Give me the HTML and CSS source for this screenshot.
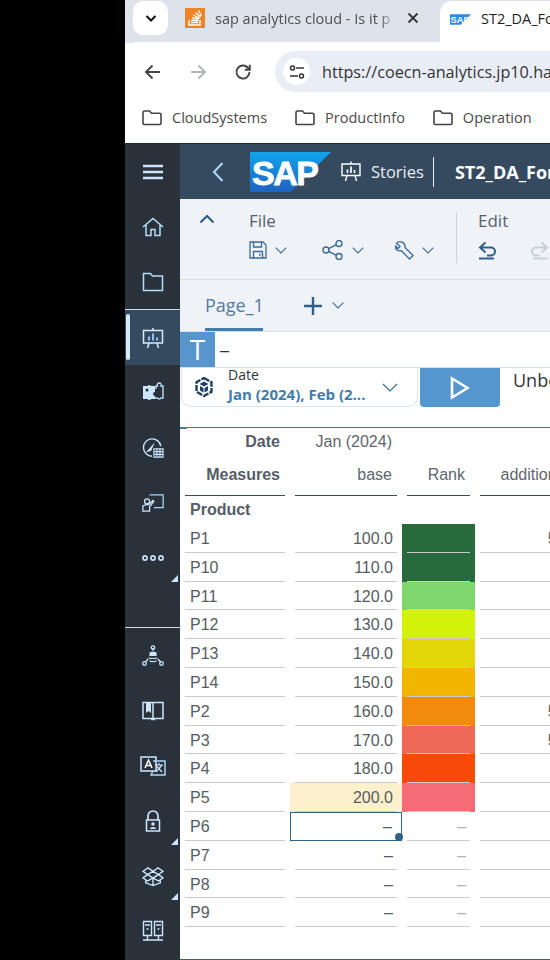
FILE: index.html
```html
<!DOCTYPE html>
<html lang="en">
<head>
<meta charset="utf-8">
<title>ST2_DA_Fo</title>
<link rel="stylesheet" href="styles.css">
</head>
<body>
<div class="black"></div>
<div class="window">
  <div class="tabstrip">
    <div class="tabmenu"><svg width="14" height="14" viewBox="0 0 14 14"><path d="M2.5 5l4.500 4.500L11.500 5" fill="none" stroke="#111" stroke-width="2"/></svg></div>
    <div class="tab">
      <svg class="favicon" width="20" height="20" viewBox="0 0 20 20"><rect width="20" height="20" fill="#ee8427"/><path d="M4 12v5h11v-5M6 14.500h7M6.300 12l7 .7M7 9.500l6.800 1.800M8.300 7l6.200 3.200M10.500 4.500l5 4.500M13.500 2.500l3 5.500" fill="none" stroke="#fff" stroke-width="1.400"/></svg>
      <span class="tabtitle">sap analytics cloud - Is it p</span>
      <svg class="tabclose" width="12" height="12" viewBox="0 0 12 12"><path d="M1.500 1.500l9 9M10.500 1.500l-9 9" stroke="#333" stroke-width="1.800"/></svg>
    </div>
    <div class="tab-active">
      <svg width="21" height="11" viewBox="0 0 81 40"><path d="M0 0h81L41 40H0z" fill="#2a8ce0"/><text x="2" y="33" font-family="Liberation Sans" font-weight="700" font-size="36" fill="#fff">SAP</text></svg>
      <span class="tabtitle-active">ST2_DA_Fo</span>
    </div>
  </div>
  <div class="navbar-chrome">
    <svg class="nav-ic" width="18" height="16" viewBox="0 0 18 16"><path d="M16 8H2M8.500 1.500L2 8l6.500 6.500" fill="none" stroke="#444" stroke-width="1.900"/></svg>
    <svg class="nav-ic" width="18" height="16" viewBox="0 0 18 16"><path d="M2 8h14M9.500 1.500L16 8l-6.500 6.500" fill="none" stroke="#b4b7ba" stroke-width="1.900"/></svg>
    <svg class="nav-ic" width="18" height="18" viewBox="0 0 18 18"><path d="M15.500 9a6.500 6.500 0 1 1-2-4.700L15.500 6.500M15.800 1.800v5h-5" fill="none" stroke="#444" stroke-width="1.900"/></svg>
    <div class="address">
      <span class="tune"><svg width="16" height="14" viewBox="0 0 16 14"><circle cx="3.500" cy="3" r="2" fill="none" stroke="#333" stroke-width="1.500"/><path d="M7 3h8M1 11h8" stroke="#333" stroke-width="1.700"/><circle cx="12.500" cy="11" r="2" fill="none" stroke="#333" stroke-width="1.500"/></svg></span>
      <span class="url">https://coecn-analytics.jp10.hana.ondemand.com</span>
    </div>
  </div>
  <div class="bookmarks">
    <span class="bm"><svg width="20" height="16" viewBox="0 0 20 16"><path d="M1 2.500a1.500 1.500 0 0 1 1.500-1.500h5l2 2.200h8a1.500 1.500 0 0 1 1.500 1.500v8.800a1 1 0 0 1-1 1H2a1 1 0 0 1-1-1z" fill="none" stroke="#444" stroke-width="1.600"/></svg>CloudSystems</span>
    <span class="bm"><svg width="20" height="16" viewBox="0 0 20 16"><path d="M1 2.500a1.500 1.500 0 0 1 1.500-1.500h5l2 2.200h8a1.500 1.500 0 0 1 1.500 1.500v8.800a1 1 0 0 1-1 1H2a1 1 0 0 1-1-1z" fill="none" stroke="#444" stroke-width="1.600"/></svg>ProductInfo</span>
    <span class="bm"><svg width="20" height="16" viewBox="0 0 20 16"><path d="M1 2.500a1.500 1.500 0 0 1 1.500-1.500h5l2 2.200h8a1.500 1.500 0 0 1 1.500 1.500v8.800a1 1 0 0 1-1 1H2a1 1 0 0 1-1-1z" fill="none" stroke="#444" stroke-width="1.600"/></svg>Operation</span>
  </div>
  <div class="app">
    <nav class="rail">
      <div class="rail-item"><svg width="22" height="16" viewBox="0 0 22 16"><path d="M1 2h20M1 8h20M1 14h20" stroke="#cde6fb" stroke-width="2.400"/></svg></div>
      <div class="rail-item"><svg class="ric" viewBox="0 0 22 20"><path d="M1 10L11 1.500 21 10M4 8v10.500h5v-6h4v6h5V8" fill="none" stroke="#b9dcf8" stroke-width="1.500"/></svg></div>
      <div class="rail-item"><svg class="ric" viewBox="0 0 22 20"><path d="M1.500 18.500V1.500h7l2 2.500h10v14.500z" fill="none" stroke="#b9dcf8" stroke-width="1.500"/></svg></div>
      <div class="rail-item rail-sel">
        <span class="sel-bar"></span>
        <svg class="ric" viewBox="0 0 22 22"><path d="M1.500 3.500h19v12.500h-19zM11 1v2.500M7 16l-1.500 5M15 16l1.500 5" fill="none" stroke="#d5ebfc" stroke-width="1.500"/><path d="M7 13.500v-4M11 13.500V6.500M15 13.500v-3" stroke="#8ec5f2" stroke-width="2"/></svg>
      </div>
      <div class="rail-item"><svg class="ric" viewBox="0 0 22 22"><path d="M1 4h4.500a2 2 0 0 1 3.500 0h4v13H9a2 2 0 0 1-3.500 0H1z" fill="#cde6fb"/><path d="M14 7V4h1.500a2 2 0 1 1 3.500 0H21v12h-2a2 2 0 0 1-3.500 0H13" fill="none" stroke="#b9dcf8" stroke-width="1.400"/><circle cx="5" cy="8" r="1.500" fill="#29313b"/><circle cx="13" cy="12" r="2" fill="#29313b"/></svg></div>
      <div class="rail-item"><svg class="ric" viewBox="0 0 24 22"><path d="M11 20A9.500 9.500 0 1 1 20.500 9" fill="none" stroke="#cde6fb" stroke-width="1.500"/><path d="M4 16L14 5l-4 9z" fill="#cde6fb"/><path d="M13 12h10v9H13zM16.300 12v9M19.600 12v9M13 15h10M13 18h10" fill="none" stroke="#cde6fb" stroke-width="1.200"/></svg></div>
      <div class="rail-item"><svg class="ric" viewBox="0 0 26 22"><path d="M9 1.500h16v15H14" fill="none" stroke="#a9d6fa" stroke-width="1.500"/><circle cx="6" cy="9" r="3" fill="none" stroke="#cde6fb" stroke-width="1.500"/><path d="M1 20.500v-6l4-1.500h3l5-5 1 1-5 6.500v5z" fill="none" stroke="#cde6fb" stroke-width="1.500"/></svg></div>
      <div class="rail-item rail-more"><svg width="22" height="6" viewBox="0 0 22 6"><g fill="none" stroke="#cde6fb" stroke-width="1.600"><circle cx="3" cy="3" r="2.100"/><circle cx="11" cy="3" r="2.100"/><circle cx="19" cy="3" r="2.100"/></g></svg><i class="corner"></i></div>
      <div class="rail-gap"></div>
      <div class="rail-item"><svg class="ric" viewBox="0 0 22 22"><path d="M11 3v3M6.500 13.500L3.500 17M15.500 13.500l3 3.500" stroke="#cde6fb" stroke-width="1.300"/><circle cx="11" cy="2.500" r="1.700" fill="none" stroke="#cde6fb" stroke-width="1.300"/><circle cx="2.500" cy="18.500" r="1.800" fill="none" stroke="#cde6fb" stroke-width="1.300"/><circle cx="19.500" cy="18.500" r="1.800" fill="none" stroke="#cde6fb" stroke-width="1.300"/><path d="M7 8a4 1.700 0 0 1 8 0v8a4 1.700 0 0 1-8 0zM7 11a4 1.700 0 0 0 8 0M7 14a4 1.700 0 0 0 8 0" fill="#cde6fb" stroke="#29313b" stroke-width=".8"/></svg></div>
      <div class="rail-item"><svg class="ric" viewBox="0 0 22 20"><path d="M1 1.500h20v16H1zM11 1.500v16M9 18.500h4" fill="none" stroke="#cde6fb" stroke-width="1.500"/><path d="M4 2h5v10l-2.500-2L4 12z" fill="#cde6fb"/></svg></div>
      <div class="rail-item"><svg class="ric wide" viewBox="0 0 26 20"><path d="M1 1h15v14H1z" fill="none" stroke="#cde6fb" stroke-width="1.500"/><path d="M13 5h12v14H11l2-4" fill="none" stroke="#a9d6fa" stroke-width="1.500"/><path d="M5 12l3.500-8 3.500 8M6.300 9.500h4.400" fill="none" stroke="#fff" stroke-width="1.500"/><path d="M15 9h8M19 7v2M16 16l6-7M16.500 10l5.500 6" fill="none" stroke="#cde6fb" stroke-width="1.200"/></svg></div>
      <div class="rail-item rail-more"><svg class="ric" viewBox="0 0 22 22"><path d="M6 10V6a5 5 0 0 1 10 0v4" fill="none" stroke="#cde6fb" stroke-width="1.700"/><path d="M4.500 10h13v11h-13z" fill="none" stroke="#cde6fb" stroke-width="1.500"/><circle cx="11" cy="14" r="1.800" fill="#cde6fb"/><path d="M8 19a3 2 0 0 1 6 0z" fill="#cde6fb"/></svg><i class="corner"></i></div>
      <div class="rail-item rail-more"><svg class="ric" viewBox="0 0 24 22"><path d="M12 6L6.500 2 1 6l5 3.500zM12 6l5.500-4L23 6l-5 3.500zM6 9.500L1 13l5 3.500 6-3.500 6 3.500 5-3.500-5-3.500-6 3.500zM4 15v3.500l8 3 8-3V15M12 14v7" fill="none" stroke="#cde6fb" stroke-width="1.500"/></svg><i class="corner"></i></div>
      <div class="rail-item"><svg class="ric" viewBox="0 0 22 22"><path d="M1.500 1.500h8v14h-8zM12.500 1.500h8v14h-8zM3 5h5M14 5h5M1 20h20M5.500 15.500V20M16.500 15.500V20" fill="none" stroke="#cde6fb" stroke-width="1.400"/><circle cx="5.500" cy="9" r="1" fill="#cde6fb"/><circle cx="16.500" cy="9" r="1" fill="#cde6fb"/></svg></div>
    </nav>
    <main class="content">
      <header class="shell">
        <svg class="back" width="14" height="22" viewBox="0 0 14 22"><path d="M11.500 2L3 11l8.500 9" fill="none" stroke="#a9d4f5" stroke-width="2.200"/></svg>
        <div class="sap-logo">
          <svg class="sap-bg" width="81" height="40" viewBox="0 0 81 40"><defs><linearGradient id="sg" x1="0" y1="0" x2="0" y2="1"><stop offset="0" stop-color="#12a4ec"/><stop offset="1" stop-color="#1f62c0"/></linearGradient></defs><path d="M0 0h81L41 40H0z" fill="url(#sg)"/></svg>
          <span class="sap-text">SAP</span>
        </div>
        <svg class="stories-ic" width="20" height="21" viewBox="0 0 20 21"><path d="M1 3h18v11.500H1zM10 .5V3M6 14.500L4.500 20M14 14.500l1.500 5.500" fill="none" stroke="#fff" stroke-width="1.400"/><path d="M6.500 12V8.500M10 12V5.500M13.500 12V9" stroke="#fff" stroke-width="1.700"/></svg>
        <span class="stories">Stories</span>
        <span class="shell-sep"></span>
        <span class="doc">ST2_DA_Forecast</span>
      </header>
      <section class="ribbon">
        <svg class="collapse" width="16" height="10" viewBox="0 0 16 10"><path d="M1.500 8.500L8 2l6.500 6.500" fill="none" stroke="#2f5a84" stroke-width="2"/></svg>
        <div class="rib-group file">
          <div class="rib-label">File</div>
          <div class="rib-tools">
            <span class="tool t1"><svg width="18" height="18" viewBox="0 0 18 18"><path d="M1 1h13l3 3v13H1zM4.500 1v5h8V1M4.500 17v-6.500h9V17M11 12.500V15" fill="none" stroke="#3a6a97" stroke-width="1.300"/></svg><svg class="chev" width="12" height="7" viewBox="0 0 12 7"><path d="M.7.7L6 6 11.300.7" fill="none" stroke="#3a6a97" stroke-width="1.100"/></svg></span>
            <span class="tool t2"><svg width="22" height="20" viewBox="0 0 22 20"><circle cx="4" cy="10" r="3" fill="none" stroke="#3a6a97" stroke-width="1.400"/><circle cx="17" cy="3.500" r="3" fill="none" stroke="#3a6a97" stroke-width="1.400"/><circle cx="17" cy="16.500" r="3" fill="none" stroke="#3a6a97" stroke-width="1.400"/><path d="M6.700 8.700l7.600-4M6.700 11.300l7.600 4" stroke="#3a6a97" stroke-width="1.400"/></svg><svg class="chev" width="12" height="7" viewBox="0 0 12 7"><path d="M.7.7L6 6 11.300.7" fill="none" stroke="#3a6a97" stroke-width="1.100"/></svg></span>
            <span class="tool t3"><svg width="19" height="19" viewBox="0 0 19 19"><path d="M7 1.200a5 5 0 0 0-5.500 1L5 5.500 3 7.500-.0 4.500a5 5 0 0 0 6.500 5.200L14.500 18l3.500-3.500-8-8A5 5 0 0 0 7 1.200z" fill="none" stroke="#3a6a97" stroke-width="1.300"/></svg><svg class="chev" width="12" height="7" viewBox="0 0 12 7"><path d="M.7.7L6 6 11.300.7" fill="none" stroke="#3a6a97" stroke-width="1.100"/></svg></span>
          </div>
        </div>
        <span class="rib-sep"></span>
        <div class="rib-group edit">
          <div class="rib-label">Edit</div>
          <div class="rib-tools">
            <svg width="19" height="19" viewBox="0 0 19 19"><path d="M7.500 1.500L2 6.500l5.500 5M2 6.500h11a4 4 0 0 1 0 8H9M1 17.500h15" fill="none" stroke="#2f5f8d" stroke-width="2"/></svg>
            <svg class="redo" width="19" height="19" viewBox="0 0 19 19"><path d="M11.500 1.500L17 6.500l-5.500 5M17 6.500H6a4 4 0 0 0 0 8h4M3 17.500h15" fill="none" stroke="#c7d0d6" stroke-width="2"/></svg>
          </div>
        </div>
      </section>
      <div class="pages">
        <span class="page-tab">Page_1</span>
        <svg class="plus" width="18" height="18" viewBox="0 0 18 18"><path d="M9 0v18M0 9h18" stroke="#2f5f8d" stroke-width="2.400"/></svg>
        <svg width="12" height="7" viewBox="0 0 12 7"><path d="M.7.700L6 6 11.300.7" fill="none" stroke="#3a6a97" stroke-width="1.100"/></svg>
      </div>
      <div class="formula">
        <span class="formula-t">T</span>
        <span class="formula-v">–</span>
      </div>
      <div class="filters">
        <div class="filter-card">
          <svg class="cube" width="18" height="20" viewBox="0 0 18 20"><path d="M9 1l7.500 4.300v9.400L9 19l-7.500-4.300V5.300z" fill="none" stroke="#1d3f62" stroke-width="2.400" stroke-dasharray="6 1.200"/><path d="M4.500 7L9 4.500 13.500 7 9 9.500zM5 9l3.500 2v4.500L5 13.500zM13 9l-3.500 2v4.500l3.500-2z" fill="#1d3f62"/></svg>
          <div class="filter-text">
            <div class="filter-name">Date</div>
            <div class="filter-val">Jan (2024), Feb (2...</div>
          </div>
          <svg class="filter-chev" width="16" height="9" viewBox="0 0 16 9"><path d="M1 1l7 7 7-7" fill="none" stroke="#3a6a97" stroke-width="1.200"/></svg>
        </div>
        <div class="play"><svg width="20" height="24" viewBox="0 0 20 24"><path d="M2 2.500L17.500 12 2 21.500z" fill="none" stroke="#fff" stroke-width="2.600"/></svg></div>
        <span class="unb">Unbooked</span>
      </div>
      <div class="table-wrap">
        <div class="grid head-date">
          <div class="c th right">Date</div>
          <div class="c muted right">Jan (2024)</div>
        </div>
        <div class="grid head-meas">
          <div class="c th right ruled">Measures</div>
          <div class="c muted right ruled">base</div>
          <div class="c muted right ruled">Rank</div>
          <div class="c muted right ruled">additional</div>
        </div>
        <div class="grid head-prod"><div class="c th">Product</div></div>
        <div class="grid row"><div class="c line">P1</div><div class="c line right">100.0</div><div class="heat h1"><span class="c line"></span></div><div class="c line right">5.0</div></div>
        <div class="grid row"><div class="c line">P10</div><div class="c line right">110.0</div><div class="heat h1"><span class="c line"></span></div><div class="c line right"></div></div>
        <div class="grid row"><div class="c line">P11</div><div class="c line right">120.0</div><div class="heat h2"><span class="c line"></span></div><div class="c line right"></div></div>
        <div class="grid row"><div class="c line">P12</div><div class="c line right">130.0</div><div class="heat h3"><span class="c line"></span></div><div class="c line right"></div></div>
        <div class="grid row"><div class="c line">P13</div><div class="c line right">140.0</div><div class="heat h4"><span class="c line"></span></div><div class="c line right"></div></div>
        <div class="grid row"><div class="c line">P14</div><div class="c line right">150.0</div><div class="heat h5"><span class="c line"></span></div><div class="c line right"></div></div>
        <div class="grid row"><div class="c line">P2</div><div class="c line right">160.0</div><div class="heat h6"><span class="c line"></span></div><div class="c line right">5.0</div></div>
        <div class="grid row"><div class="c line">P3</div><div class="c line right">170.0</div><div class="heat h7"><span class="c line"></span></div><div class="c line right">5.0</div></div>
        <div class="grid row"><div class="c line">P4</div><div class="c line right">180.0</div><div class="heat h8"><span class="c line"></span></div><div class="c line right"></div></div>
        <div class="grid row"><div class="c line">P5</div><div class="hl"><div class="c line right">200.0</div></div><div class="heat h9"><span class="c line"></span></div><div class="c line right"></div></div>
        <div class="grid row"><div class="c line">P6</div><div class="selected">–<i class="handle"></i></div><div class="c line right faint">–</div><div class="c line right"></div></div>
        <div class="grid row"><div class="c line">P7</div><div class="c line right">–</div><div class="c line right faint">–</div><div class="c line right"></div></div>
        <div class="grid row"><div class="c line">P8</div><div class="c line right">–</div><div class="c line right faint">–</div><div class="c line right"></div></div>
        <div class="grid row"><div class="c line">P9</div><div class="c line right">–</div><div class="c line right faint">–</div><div class="c line right"></div></div>
        <div class="table-foot"></div>
      </div>
    </main>
  </div>
</div>
</body>
</html>
```

FILE: styles.css
```css
* { box-sizing: border-box; }
html, body { margin: 0; height: 960px; overflow: hidden; background: #000; }
body { display: flex; width: 550px; font-family: "Open Sans", "Liberation Sans", sans-serif; }
.black { width: 125px; flex: none; background: #000; }
.window { width: 425px; flex: none; height: 960px; overflow: hidden; background: #fff; display: flex; flex-direction: column; }

/* browser chrome */
.tabstrip { height: 43px; flex: none; background: #dee3ea; display: flex; align-items: flex-start; position: relative; }
.tabmenu { width: 35px; height: 34px; flex: none; margin: 1px 0 0 8px; background: #fff; border-radius: 10px; display: flex; align-items: center; justify-content: center; }
.tab { width: 272px; height: 43px; flex: none; display: flex; align-items: flex-start; padding: 8px 0 0 17px; }
.favicon { flex: none; }
.tabtitle { width: 180px; flex: none; margin: 0 0 0 10px; font-size: 14.500px; line-height: 21px; color: #4b4f54; white-space: nowrap; overflow: hidden; -webkit-mask-image: linear-gradient(90deg, #000 165px, transparent); mask-image: linear-gradient(90deg, #000 165px, transparent); }
.tabclose { margin: 4px 0 0 12px; flex: none; }
.tab-active { flex: 1; height: 43px; margin-top: 1px; background: #fff; border-radius: 12px 0 0 0; display: flex; align-items: flex-start; padding: 7px 0 0 10px; }
.tab-active svg { margin-top: 6px; flex: none; }
.tabtitle-active { margin-left: 10px; font-size: 14.500px; line-height: 21px; color: #1f1f1f; white-space: nowrap; }
.navbar-chrome { height: 50px; flex: none; background: #fff; border-radius: 12px 0 0 0; margin-top: -1px; display: flex; align-items: center; padding: 9px 0 0 19px; position: relative; }
.nav-ic { flex: none; margin-right: 27px; }
.nav-ic + .nav-ic + .nav-ic { margin-right: 23px; }
.address { flex: 1; height: 41px; margin-right: -60px; margin-left: 0; background: #e9edf6; border-radius: 21px 0 0 21px; display: flex; align-items: center; padding-left: 8px; overflow: hidden; }
.tune { width: 27px; height: 27px; flex: none; border-radius: 50%; background: #fff; display: flex; align-items: center; justify-content: center; }
.url { margin-left: 12px; font-size: 16.200px; color: #333; white-space: nowrap; }
.bookmarks { height: 52px; flex: none; background: #fff; display: flex; align-items: center; padding: 0 0 0 17px; gap: 28px; border-bottom: 1px solid #1d2a36; }
.bm { display: flex; align-items: center; gap: 10px; font-size: 14.500px; color: #4a4a4a; white-space: nowrap; }
.bm svg { flex: none; }

/* rail */
.app { flex: 1; display: flex; min-height: 0; }
.rail { width: 55px; flex: none; background: #29313b; display: flex; flex-direction: column; }
.rail-item { height: 55px; flex: none; display: flex; align-items: center; justify-content: center; position: relative; }
.rail-sel { height: 56px; background: #354a5f; border-top: 1px solid #d5dbe2; }
.sel-bar { position: absolute; left: 1px; top: 4px; width: 4px; height: 46px; background: #d5ebfc; border-radius: 2px; }
.rail-gap { height: 43px; flex: none; border-bottom: 1px solid #d5dbe2; }
.ric { width: 22px; height: 22px; }
.ric.wide { width: 26px; }
.corner { position: absolute; right: 2px; bottom: 3px; width: 0; height: 0; border-style: solid; border-width: 0 0 7px 7px; border-color: transparent transparent #cde6fb transparent; }

/* content */
.content { flex: 1; min-width: 0; display: flex; flex-direction: column; overflow: hidden; }
.shell { height: 55px; flex: none; background: #354a5f; display: flex; align-items: center; padding-left: 31px; white-space: nowrap; }
.back { flex: none; }
.sap-logo { width: 81px; height: 40px; flex: none; margin: 0 0 0 25px; position: relative; }
.sap-bg { display: block; }
.sap-text { position: absolute; left: 2px; top: 1px; font-family: "Liberation Sans", sans-serif; font-weight: 700; font-size: 34px; line-height: 40px; letter-spacing: -1.500px; color: #fff; -webkit-text-stroke: 0.8px #fff; }
.stories-ic { flex: none; margin-left: 10px; }
.stories { margin-left: 10px; font-size: 16.500px; color: #e8eef4; }
.shell-sep { width: 1px; height: 30px; margin-left: 9px; background: #e8eef4; flex: none; }
.doc { margin-left: 21px; font-size: 18px; font-weight: 700; color: #fff; }

.ribbon { height: 81px; flex: none; background: #eff2f7; border-bottom: 1px solid #d3e0ea; display: flex; align-items: flex-start; position: relative; white-space: nowrap; }
.collapse { margin: 15px 0 0 19px; flex: none; }
.rib-group { padding-top: 10px; }
.file { margin-left: 34px; width: 207px; }
.rib-label { font-size: 17px; line-height: 24px; color: #55606b; }
.rib-tools { display: flex; align-items: center; height: 26px; margin-top: 4px; }
.tool { display: flex; align-items: center; gap: 8px; }
.t1 { width: 73px; }
.t2 { width: 73px; }
.rib-sep { width: 1px; height: 50px; margin-top: 14px; background: #cbd2d9; flex: none; }
.edit { margin-left: 21px; flex: none; }
.edit .rib-tools svg { flex: none; }
.redo { margin-left: 33px; }

.pages { height: 52px; flex: none; background: #eff2f7; border-bottom: 1px solid #d3e0ea; display: flex; align-items: center; padding-left: 25px; }
.page-tab { height: 51px; padding-top: 12px; font-size: 18px; line-height: 27px; color: #4f7aa3; border-bottom: 3px solid #427cac; width: 58px; flex: none; white-space: nowrap; }
.plus { margin-left: 41px; margin-right: 10px; flex: none; }

.formula { height: 36px; flex: none; background: #fff; border-bottom: 1px solid #d3e0ea; display: flex; align-items: stretch; }
.formula-t { width: 35px; background: #5895cd; color: #fff; font-size: 28px; line-height: 35px; text-align: center; }
.formula-v { margin-left: 5px; font-family: "Liberation Sans", sans-serif; font-size: 16px; line-height: 38px; color: #333; }

.filters { height: 59px; flex: none; display: flex; align-items: flex-start; padding-left: 1px; white-space: nowrap; }
.filter-card { width: 237px; height: 39px; flex: none; border: 1px solid #d9e5ef; border-top: 0; border-radius: 0 0 10px 10px; display: flex; align-items: center; padding: 0 19px 0 13px; }
.cube { flex: none; margin-right: 15px; }
.filter-text { flex: 1; min-width: 0; }
.filter-name { font-size: 14px; line-height: 16px; color: #32363a; margin-top: -3px; }
.filter-val { font-size: 15px; line-height: 20px; font-weight: 700; color: #427cac; margin-top: 1px; white-space: nowrap; }
.filter-chev { flex: none; }
.play { width: 80px; height: 39px; flex: none; margin-left: 2px; background: #5496cd; border-radius: 0 0 4px 4px; display: flex; align-items: center; justify-content: center; }
.unb { margin-left: 13px; font-size: 18px; line-height: 25px; color: #32363a; }

.table-wrap { flex: 1; min-height: 0; border-top: 1px solid #427cac; display: flex; flex-direction: column; font-family: "Liberation Sans", Arial, sans-serif; font-size: 16px; color: #556; position: relative; }
.table-wrap::before { content: ""; position: absolute; left: 0; top: -1px; width: 7px; height: 2px; background: #427cac; }
.grid { display: grid; grid-template-columns: 110px 112px 73px 104px; flex: none; width: 399px; }
.head-date { height: 30px; align-items: start; }
.head-meas { height: 38px; align-items: stretch; }
.head-prod { height: 28px; align-items: center; }
.row { height: 28.800px; }
.c { margin: 0 5px; display: block; overflow: hidden; white-space: nowrap; line-height: 28px; }
.th { font-weight: 700; font-size: 16px; color: #555d66; }
.muted { color: #60666d; }
.right { text-align: right; }
.ruled { border-bottom: 1px solid #354a5f; line-height: 33px; height: 38px; }
.head-date .c { margin-right: 10px; }
.head-meas .muted { padding-right: 5px; }
.head-meas .th { padding-right: 5px; }
.head-prod .c { margin-left: 10px; line-height: 28px; }
.line { height: 28.800px; border-bottom: 1px solid #ccc; line-height: 30px; color: #555b62; }
.row > .c:first-child { padding-left: 5px; }
.row > .right, .hl .right { padding-right: 4px; }
.heat { height: 28.800px; }
.heat .c { border-bottom-color: #ccc; }
.h1 { background: #276b3c; }
.h2 { background: #7fd66f; }
.h3 { background: #d2f20a; }
.h4 { background: #e2d508; }
.h5 { background: #f2b500; }
.h6 { background: #f28a0d; }
.h7 { background: #ef6857; }
.h8 { background: #f6490a; }
.h9 { background: #f66c76; }
.hl { background: #fdf0cc; height: 28.800px; }
.selected { position: relative; height: 28.800px; border: 1px solid #346187; text-align: right; line-height: 28px; padding-right: 9px; color: #555b62; }
.handle { position: absolute; right: -2px; bottom: -1px; width: 8px; height: 8px; border-radius: 50%; background: #346187; }
.faint { color: #b0b4b8; }
.table-foot { margin-top: auto; height: 1px; background: #346187; }
```
